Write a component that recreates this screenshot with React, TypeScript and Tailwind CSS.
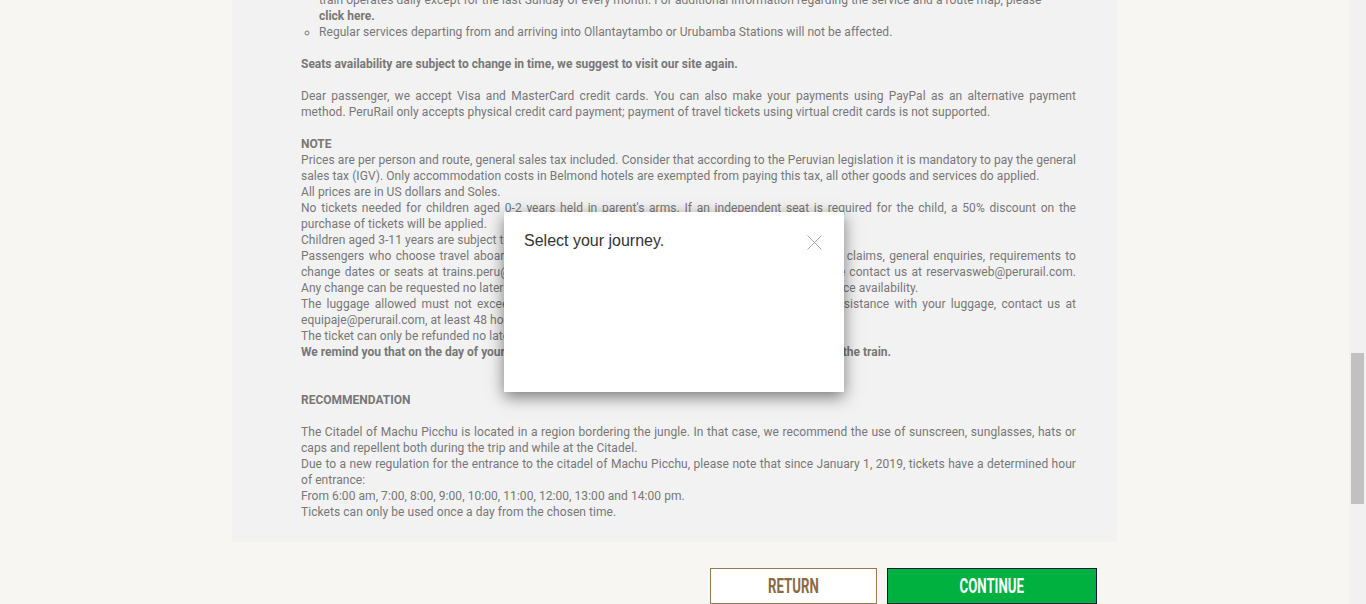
import React from "react";

const J = ({ children }: { children: React.ReactNode }) => (
  <span className="block text-justify [text-align-last:justify]">{children}</span>
);
const L = ({ children }: { children: React.ReactNode }) => <span className="block">{children}</span>;
const B = ({ children }: { children: React.ReactNode }) => <b className="font-bold tracking-normal">{children}</b>;

export default function App() {
  return (
    <div className="flex h-[604px] w-full overflow-hidden bg-[#f7f6f3] font-['Roboto',sans-serif]">
      <main className="relative flex-1 overflow-hidden">
        <div className="-mt-[24px] flex flex-col items-center">
          <section className="w-[885px] bg-[#f2f2f2] pb-[22px] pl-[69px] pr-[41px] text-[12px] leading-[16px] tracking-[0.06px] text-[#777]">
            <ul className="list-[circle] pl-[18px]">
              <li>
                Starting on March 1, 2019, the Expedition train will have a new schedule for the route Cusco – Machu Picchu – Cusco. This
                <br />
                train operates daily except for the last Sunday of every month. For additional information regarding the service and a route map, please
                <br />
                <B>click here.</B>
              </li>
              <li>Regular services departing from and arriving into Ollantaytambo or Urubamba Stations will not be affected.</li>
            </ul>
            <p className="mt-4">
              <B>Seats availability are subject to change in time, we suggest to visit our site again.</B>
            </p>
            <p className="mt-4">
              <J>
                Dear passenger, we accept Visa and MasterCard credit cards. You can also make your payments using PayPal as an alternative payment
              </J>
              <L>
                method. PeruRail only accepts physical credit card payment; payment of travel tickets using virtual credit cards is not supported.
              </L>
            </p>
            <div className="mt-4">
              <L>
                <B>NOTE</B>
              </L>
              <J>
                Prices are per person and route, general sales tax included. Consider that according to the Peruvian legislation it is mandatory to pay the general
              </J>
              <L>
                sales tax (IGV). Only accommodation costs in Belmond hotels are exempted from paying this tax, all other goods and services do applied.
              </L>
              <L>All prices are in US dollars and Soles.</L>
              <J>
                No tickets needed for children aged 0-2 years held in parent's arms. If an independent seat is required for the child, a 50% discount on the
              </J>
              <L>purchase of tickets will be applied.</L>
              <L>Children aged 3-11 years are subject to a discount on the price of the ticket.</L>
              <J>
                Passengers who choose travel aboard the Hiram Bingham or Belmond Andean Explorer send their claims, general enquiries, requirements to
              </J>
              <J>
                change dates or seats at trains.peru@belmond.com. For all other services and reservations, please contact us at reservasweb@perurail.com.
              </J>
              <L>Any change can be requested no later than 24 hours before the departure of your train, subject to space availability.</L>
              <J>
                The luggage allowed must not exceed 5 kg/11 lb. per passenger on our trains. If you require assistance with your luggage, contact us at
              </J>
              <L>equipaje@perurail.com, at least 48 hours before your trip.</L>
              <L>The ticket can only be refunded no later than 24 hours before departure.</L>
              <L>
                <B>We remind you that on the day of your travel, you must be at the train station before the departure of the train.</B>
              </L>
            </div>
            <p className="mt-8">
              <B>RECOMMENDATION</B>
            </p>
            <div className="mt-4">
              <J>
                The Citadel of Machu Picchu is located in a region bordering the jungle. In that case, we recommend the use of sunscreen, sunglasses, hats or
              </J>
              <L>caps and repellent both during the trip and while at the Citadel.</L>
              <J>
                Due to a new regulation for the entrance to the citadel of Machu Picchu, please note that since January 1, 2019, tickets have a determined hour
              </J>
              <L>of entrance:</L>
              <L>From 6:00 am, 7:00, 8:00, 9:00, 10:00, 11:00, 12:00, 13:00 and 14:00 pm.</L>
              <L>Tickets can only be used once a day from the chosen time.</L>
            </div>
          </section>
          <div className="mt-[26px] flex w-[885px] justify-end gap-[10px] pr-[20px]">
            <button className="flex h-[36px] w-[167px] items-center justify-center border border-[#9a7a52] bg-white text-[20px] font-bold text-[#8a6a42]">
              <span className="inline-block scale-x-[0.66]">RETURN</span>
            </button>
            <button className="flex h-[36px] w-[210px] items-center justify-center border border-[#0e1a40] bg-[#00b140] text-[20px] font-bold text-white">
              <span className="inline-block scale-x-[0.66]">CONTINUE</span>
            </button>
          </div>
        </div>

        <div className="absolute inset-0 flex justify-center pr-[1px] pt-[212px]">
          <div className="relative h-[180px] w-[340px] bg-white px-[20px] pt-[20px] shadow-[0_5px_15px_rgba(0,0,0,0.5)]">
            <h4 className="font-['Liberation_Sans',Arial,sans-serif] text-[16px] leading-[18px] text-[#333]">Select your journey.</h4>
            <button className="absolute right-[22px] top-[23px] h-[15px] w-[15px]" aria-label="Close">
              <svg viewBox="0 0 15 15" className="h-[15px] w-[15px]">
                <path d="M0.5 0.5 L14.5 14.5 M14.5 0.5 L0.5 14.5" stroke="#a8a8a8" strokeWidth="1" fill="none" />
              </svg>
            </button>
          </div>
        </div>
      </main>
      <div className="flex w-[17px] flex-col bg-[#f1f1f1] pt-[353px]">
        <div className="mx-auto h-[151px] w-[13px] bg-[#c1c1c1]" />
      </div>
    </div>
  );
}
